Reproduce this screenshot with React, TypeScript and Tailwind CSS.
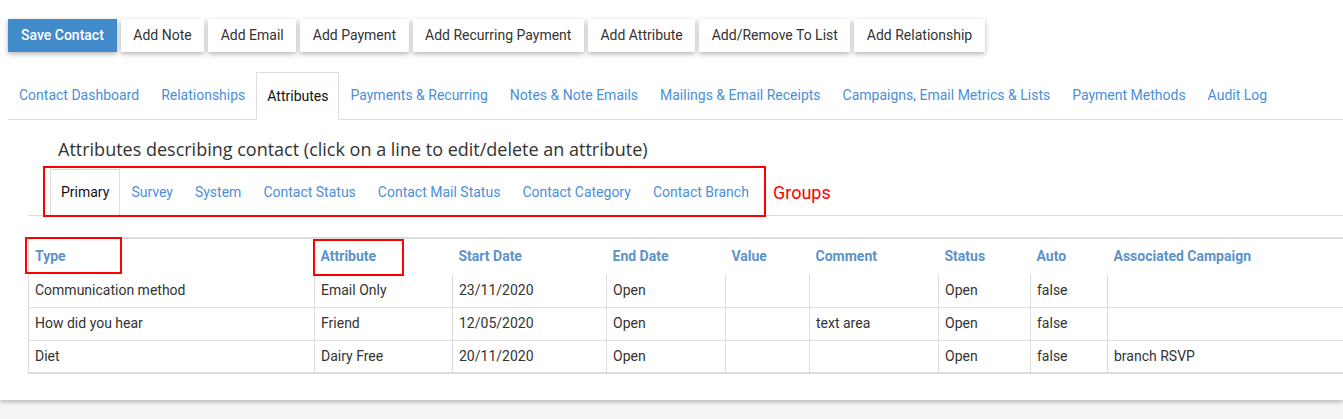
const ACTIONS = [
  "Add Note",
  "Add Email",
  "Add Payment",
  "Add Recurring Payment",
  "Add Attribute",
  "Add/Remove To List",
  "Add Relationship",
];

const MAIN_TABS = [
  "Contact Dashboard",
  "Relationships",
  "Attributes",
  "Payments & Recurring",
  "Notes & Note Emails",
  "Mailings & Email Receipts",
  "Campaigns, Email Metrics & Lists",
  "Payment Methods",
  "Audit Log",
];

const GROUPS = [
  "Primary",
  "Survey",
  "System",
  "Contact Status",
  "Contact Mail Status",
  "Contact Category",
  "Contact Branch",
];

const COLUMNS = [
  { label: "Type", width: "w-[286px]" },
  { label: "Attribute", width: "w-[138px]" },
  { label: "Start Date", width: "w-[154px]" },
  { label: "End Date", width: "w-[119px]" },
  { label: "Value", width: "w-[84px]" },
  { label: "Comment", width: "w-[129px]" },
  { label: "Status", width: "w-[92px]" },
  { label: "Auto", width: "w-[77px]" },
  { label: "Associated Campaign", width: "" },
];

const ROWS = [
  ["Communication method", "Email Only", "23/11/2020", "Open", "", "", "Open", "false", ""],
  ["How did you hear", "Friend", "12/05/2020", "Open", "", "text area", "Open", "false", ""],
  ["Diet", "Dairy Free", "20/11/2020", "Open", "", "", "Open", "false", "branch RSVP"],
];

export default function App() {
  return (
    <div className="min-h-screen bg-[#f5f5f5] font-['Roboto',sans-serif] text-[14px] text-[#333]">
      <div className="bg-white pb-[26px] shadow-[0_2px_4px_rgba(0,0,0,0.25)]">
        <div className="flex gap-[4px] px-2 pt-[19px]">
          <button className="h-[33px] bg-[#428bca] px-[13px] font-medium text-white shadow-[0_2px_5px_rgba(0,0,0,0.3)]">
            Save Contact
          </button>
          {ACTIONS.map((a) => (
            <button
              key={a}
              className="h-[33px] bg-white px-[12.5px] text-[#333] shadow-[0_2px_5px_rgba(0,0,0,0.3)]"
            >
              {a}
            </button>
          ))}
        </div>

        <div className="ml-2 mt-5 flex border-b border-[#ddd]">
          {MAIN_TABS.map((t) => (
            <div
              key={t}
              className={
                t === "Attributes"
                  ? "-mb-px flex h-[48px] items-center border border-[#ddd] border-b-white bg-white px-[10px] text-[#111]"
                  : "flex h-[47px] items-center border border-transparent px-[10px] text-[#4a90d9]"
              }
            >
              {t}
            </div>
          ))}
        </div>

        <div className="pl-[28px]">
          <h2 className="mt-[17px] pl-[30px] font-['Open_Sans',sans-serif] text-[18px] leading-[24px] text-[#333]">
            Attributes describing contact (click on a line to edit/delete an attribute)
          </h2>

          <div className="relative mt-[8px] flex border-b border-[#ddd] pl-[22px]">
            {GROUPS.map((g) => (
              <div
                key={g}
                className={
                  g === "Primary"
                    ? "-mb-px flex h-[47px] items-center border border-[#ddd] border-b-white bg-white px-[10px] text-[#111]"
                    : "flex h-[46px] items-center border border-transparent px-[10px] text-[#4a90d9]"
                }
              >
                {g}
              </div>
            ))}
            <div className="absolute left-[15px] top-[-3px] h-[51px] w-[723px] border-2 border-[#ff0000]" />
            <span className="absolute left-[745px] top-[10px] text-[18px] text-[#ff0000]">Groups</span>
          </div>

          <div className="relative mt-[21px]">
            <table className="w-full border-collapse border-l border-[#ddd] text-left">
              <thead>
                <tr className="border-t-2 border-b-0 border-[#ddd]">
                  {COLUMNS.map((c) => (
                    <th
                      key={c.label}
                      className={`${c.width} h-[36px] px-[6px] text-[14px] font-bold text-[#5b93c9]`}
                    >
                      {c.label}
                    </th>
                  ))}
                </tr>
              </thead>
              <tbody className="border-b-2 border-[#ddd]">
                {ROWS.map((r, i) => (
                  <tr key={i} className="border-b border-[#ddd]">
                    {r.map((v, j) => (
                      <td key={j} className="h-[33px] border-l border-[#ddd] px-[6px] text-[#333]">
                        {v}
                      </td>
                    ))}
                  </tr>
                ))}
              </tbody>
            </table>
            <div className="absolute left-[-3px] top-0 h-[37px] w-[97px] border-2 border-[#ff0000]" />
            <div className="absolute left-[285px] top-[2px] h-[37px] w-[91px] border-2 border-[#ff0000]" />
          </div>
        </div>
      </div>
    </div>
  );
}
